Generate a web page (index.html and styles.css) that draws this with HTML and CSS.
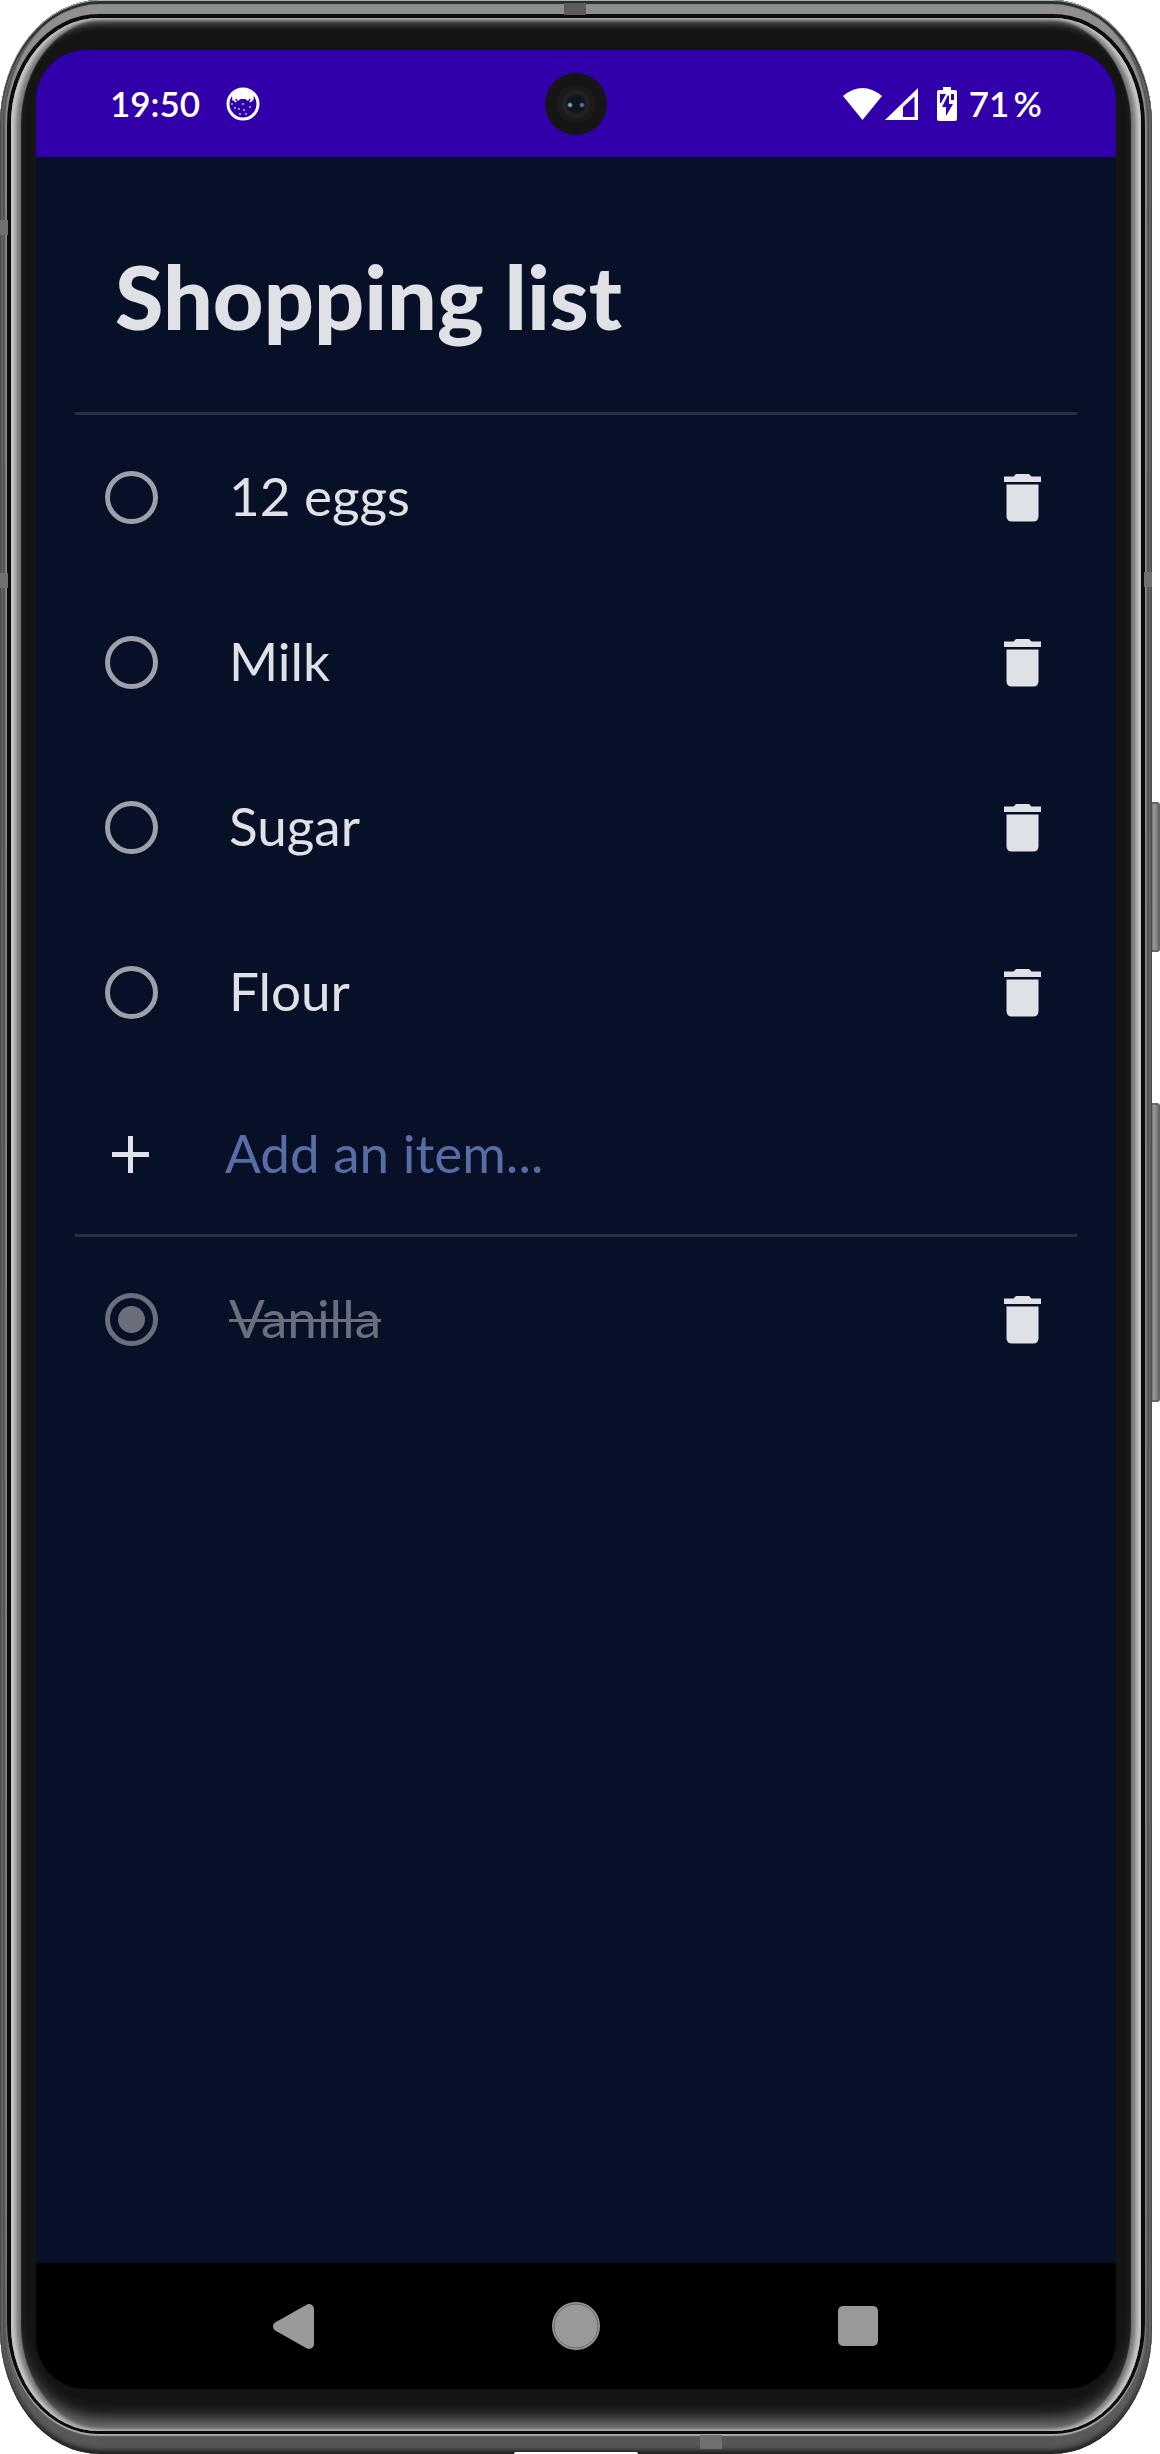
FILE: index.html
```html
<!DOCTYPE html>
<html lang="en">
<head>
<meta charset="utf-8">
<meta name="viewport" content="width=device-width, initial-scale=1">
<title>Shopping list</title>
<link rel="stylesheet" href="styles.css">
</head>
<body>
<svg class="sprite" aria-hidden="true">
  <symbol id="trash" viewBox="0 0 37 48">
    <path d="M0 2.500h9.500L12 0h13l2.500 2.500H37V8H0z"/>
    <path d="M2.500 10.500h32V42q0 5.500-5.500 5.500H8q-5.500 0-5.500-5.500z"/>
  </symbol>
</svg>
<div class="device">
  <span class="key key-power"></span>
  <span class="key key-volume"></span>
  <div class="frame">
    <span class="antenna antenna-top"></span>
    <span class="antenna antenna-bottom"></span>
    <span class="antenna antenna-left-high"></span>
    <span class="antenna antenna-left-low"></span>
    <span class="antenna antenna-right"></span>
    <span class="port"></span>
    <div class="seam">
      <div class="glass">
        <div class="screen">
          <header class="status">
            <div class="status-group">
              <time>19:50</time>
              <svg class="cat" viewBox="0 0 34 34" aria-hidden="true">
                <circle cx="17" cy="17" r="15" fill="none" stroke="#fff" stroke-width="3"/>
                <path d="M6 8Q17-4 28 8L27 14 23.500 11.500 22 14 19.500 12H14.500L12 14 10 11.500 6.500 14z" fill="#fff"/>
                <path d="M7 11l3 4M27 11l-3 4" stroke="#fff" stroke-width="2"/>
                <g fill="#fff" opacity=".7"><circle cx="9" cy="21" r="1"/><circle cx="13" cy="22" r="1"/><circle cx="17" cy="17" r="1"/><circle cx="18" cy="23" r="1"/><circle cx="24" cy="20" r="1"/><circle cx="14" cy="27" r="1"/><circle cx="20" cy="27" r="1"/><circle cx="6" cy="17" r="1"/></g>
              </svg>
            </div>
            <span class="camera"></span>
            <div class="status-group status-right">
              <svg class="wifi" viewBox="0 0 39 32" aria-hidden="true"><path d="M0 8Q19.500-8 39 8L19.500 32z" fill="#fff"/></svg>
              <svg class="signal" viewBox="0 0 33 32" aria-hidden="true"><path d="M33 0v32H0zM29.500 8.500L18 19v10h11.500z" fill="#fff" fill-rule="evenodd"/></svg>
              <svg class="battery" viewBox="0 0 20 34" aria-hidden="true">
                <path d="M6 0h8v3h4q2 0 2 2v27q0 2-2 2H2q-2 0-2-2V5q0-2 2-2h4z" fill="#fff"/>
                <path d="M3 7h6L4 16H3zM14 7h3v6h-3zM12 9v8h4L9 29V20H5L11 8z" fill="#3100ab"/>
              </svg>
              <span>71&thinsp;%</span>
            </div>
          </header>
          <main class="app">
            <h1>Shopping list</h1>
            <ul class="items">
              <li class="row">
                <input type="checkbox" id="eggs"><label for="eggs">12 eggs</label>
                <button type="button" class="delete" aria-label="Delete 12 eggs"><svg><use href="#trash"/></svg></button>
              </li>
              <li class="row">
                <input type="checkbox" id="milk"><label for="milk">Milk</label>
                <button type="button" class="delete" aria-label="Delete Milk"><svg><use href="#trash"/></svg></button>
              </li>
              <li class="row">
                <input type="checkbox" id="sugar"><label for="sugar">Sugar</label>
                <button type="button" class="delete" aria-label="Delete Sugar"><svg><use href="#trash"/></svg></button>
              </li>
              <li class="row">
                <input type="checkbox" id="flour"><label for="flour">Flour</label>
                <button type="button" class="delete" aria-label="Delete Flour"><svg><use href="#trash"/></svg></button>
              </li>
            </ul>
            <form class="row add">
              <button type="button" class="plus" aria-label="Add"><svg viewBox="0 0 37 37"><path d="M0 18.500h37M18.500 0v37" stroke="currentColor" stroke-width="5"/></svg></button>
              <input type="text" class="entry" aria-label="Add an item" placeholder="Add an item...">
            </form>
            <ul class="items done">
              <li class="row">
                <input type="checkbox" id="vanilla" checked><label for="vanilla">Vanilla</label>
                <button type="button" class="delete" aria-label="Delete Vanilla"><svg><use href="#trash"/></svg></button>
              </li>
            </ul>
          </main>
          <nav class="navbar">
            <button type="button" aria-label="Back"><svg viewBox="0 0 48 48"><path d="M39 7v35L8 24.500z" fill="#999" stroke="#999" stroke-width="10" stroke-linejoin="round"/></svg></button>
            <button type="button" aria-label="Home"><svg viewBox="0 0 48 48"><circle cx="24" cy="24" r="24" fill="#999"/><circle cx="24" cy="24" r="22" fill="none" stroke="#666"/></svg></button>
            <button type="button" aria-label="Recent apps"><svg viewBox="0 0 48 48"><rect x="4" y="4" width="40" height="40" rx="5" fill="#999"/></svg></button>
          </nav>
        </div>
      </div>
    </div>
  </div>
</div>
</body>
</html>
```
FILE: styles.css
```css
* {
  box-sizing: border-box;
}

body {
  margin: 0;
  background: #fff;
  color: #e0e1e6;
  font-family: Lato, "Open Sans", sans-serif;
}

button {
  padding: 0;
  border: 0;
  background: none;
  color: inherit;
}

svg {
  display: block;
}

.sprite {
  display: none;
}

/* Phone body */
.device {
  position: relative;
  display: flex;
  min-height: 100vh;
  padding-right: 8px;
}

.frame {
  position: relative;
  display: flex;
  flex: 1;
  padding: 14px 7px 20px;
  border-radius: 100px / 125px;
  background: linear-gradient(#909090, #858585 10%, #777 90%, #555);
  box-shadow:
    inset 0 1px 0 #aab0ac,
    inset 0 4px 1px #2a2e2c,
    inset 0 -4px 4px #222,
    inset 3px 0 1px #707070,
    inset 5px 0 1px #555,
    inset -3px 0 1px #707070,
    inset -5px 0 1px #555;
}

.seam {
  display: flex;
  flex: 1;
  padding: 4px 4px 3px;
  border-radius: 92px / 110px;
  background: #0c0c0c;
  box-shadow: 0 2px 1px #aaa;
}

.glass {
  display: flex;
  flex: 1;
  padding: 32px 25px 42px;
  border-radius: 88px / 106px;
  background: #141414;
  box-shadow:
    inset 5px 0 4px #c8c8c8,
    inset -5px 0 4px #c8c8c8,
    inset 10px 0 1px #777,
    inset -10px 0 1px #777,
    inset 0 4px 8px #888,
    inset 0 -12px 16px #777;
}

.key {
  position: absolute;
  right: 0;
  width: 12px;
  border: 2px solid #666;
  border-radius: 3px;
  background: linear-gradient(90deg, #555, #999 50%, #777);
}

.key-power {
  top: 802px;
  height: 150px;
}

.key-volume {
  top: 1103px;
  height: 299px;
}

.antenna {
  position: absolute;
  background: #707070;
}

.antenna-top {
  top: 3px;
  left: 50%;
  width: 22px;
  height: 12px;
  margin-left: -12px;
  background: #5c5c5c;
}

.antenna-bottom {
  right: 430px;
  bottom: 5px;
  width: 22px;
  height: 14px;
}

.antenna-left-high,
.antenna-left-low {
  left: 0;
  width: 8px;
  height: 15px;
}

.antenna-left-high {
  top: 220px;
}

.antenna-left-low {
  top: 573px;
}

.antenna-right {
  top: 572px;
  right: 0;
  width: 8px;
  height: 15px;
}

.port {
  position: absolute;
  bottom: 0;
  left: 50%;
  width: 124px;
  height: 2px;
  margin-left: -62px;
  border-radius: 8px 8px 0 0;
  background: #fff;
}

.screen {
  display: flex;
  flex: 1;
  flex-direction: column;
  overflow: hidden;
  border-radius: 50px;
  background: #071027;
}

/* Status bar */
.status {
  display: grid;
  grid-template-columns: 1fr auto 1fr;
  align-items: center;
  height: 107px;
  padding: 0 74px;
  background: #3100ab;
  color: #fff;
  font-size: 35px;
  font-weight: 600;
  line-height: 40px;
}

.status-group {
  display: flex;
  align-items: center;
  gap: 26px;
}

.status time,
.status-right span {
  padding-bottom: 2px;
}

.status-right {
  justify-content: flex-end;
  gap: 0;
}

.cat {
  width: 34px;
  height: 34px;
}

.camera {
  width: 62px;
  height: 62px;
  border-radius: 50%;
  background:
    radial-gradient(circle at 25px 32px, #7fb5b8 0 1px, transparent 3px),
    radial-gradient(circle at 37px 32px, #6470b8 0 1px, transparent 3px),
    radial-gradient(circle, #10141c 0 8px, #222 11px 13px, #1a1a1a 15px 19px, #151515 20px);
}

.wifi {
  width: 39px;
  height: 32px;
  margin-right: 3px;
}

.signal {
  width: 33px;
  height: 32px;
  margin-right: 19px;
}

.battery {
  width: 20px;
  height: 34px;
  margin-right: 12px;
}

/* List */
.app {
  flex: 1;
  padding: 0 39px;
}

h1 {
  margin: 0;
  padding: 88px 40px 65px;
  border-bottom: 3px solid #272e40;
  font-size: 88px;
  font-weight: 900;
  line-height: 102px;
}

.items {
  margin: 0;
  padding: 0;
  list-style: none;
}

.row {
  display: flex;
  align-items: center;
  height: 165px;
  padding: 0 36px 0 30px;
  font-size: 53px;
}

.row label {
  flex: 1;
  padding: 0 0 4px 71px;
}

.row input[type="checkbox"] {
  display: grid;
  width: 53px;
  height: 53px;
  margin: 0;
  place-content: center;
  appearance: none;
  border: 5px solid #9da0a8;
  border-radius: 50%;
}

.row input:checked {
  border-color: #6a6f7b;
}

.row input:checked::before {
  width: 27px;
  height: 27px;
  border-radius: 50%;
  background: #6a6f7b;
  content: "";
}

.delete svg {
  width: 37px;
  height: 48px;
  fill: #e0e1e6;
}

.add {
  height: 159px;
  padding-left: 37px;
}

.plus svg {
  width: 37px;
  height: 37px;
}

.entry {
  flex: 1;
  min-width: 0;
  margin-left: 76px;
  padding: 0 0 4px;
  border: 0;
  outline: 0;
  background: none;
  color: inherit;
  font: inherit;
}

.entry::placeholder {
  color: #586ca6;
  opacity: 1;
}

.done {
  border-top: 3px solid #272e40;
}

.done label {
  color: #6a6f7b;
  text-decoration: line-through;
  text-decoration-thickness: 3px;
}

/* System navigation */
.navbar {
  display: grid;
  grid-template-columns: repeat(3, 1fr);
  height: 126px;
  padding: 0 117px;
  place-items: center;
  background: #000;
}

.navbar svg {
  width: 48px;
  height: 48px;
}
```
